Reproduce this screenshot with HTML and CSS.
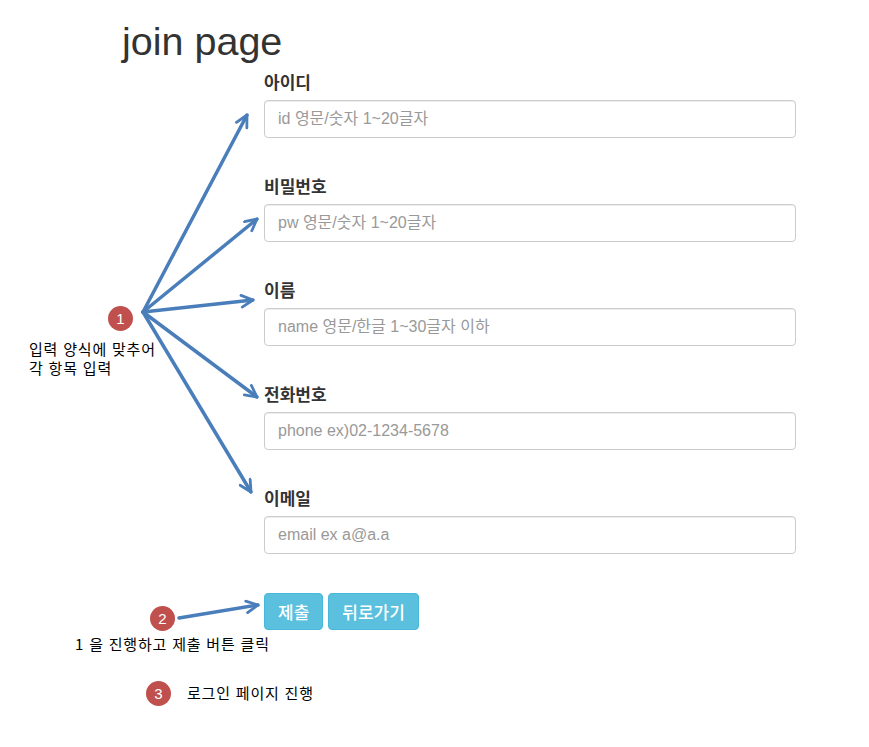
FILE: index.html
```html
<!DOCTYPE html>
<html lang="ko">
<head>
<meta charset="utf-8">
<title>join page</title>
<link rel="stylesheet" href="styles.css">
</head>
<body>
<div class="page">
  <h1 class="title">join page</h1>
  <form class="join-form">
    <div class="field">
      <label class="field-label" for="uid">아이디</label>
      <input class="field-input" id="uid" type="text" placeholder="id 영문/숫자 1~20글자">
    </div>
    <div class="field">
      <label class="field-label" for="upw">비밀번호</label>
      <input class="field-input" id="upw" type="password" placeholder="pw 영문/숫자 1~20글자">
    </div>
    <div class="field">
      <label class="field-label" for="uname">이름</label>
      <input class="field-input" id="uname" type="text" placeholder="name 영문/한글 1~30글자 이하">
    </div>
    <div class="field">
      <label class="field-label" for="uphone">전화번호</label>
      <input class="field-input" id="uphone" type="text" placeholder="phone ex)02-1234-5678">
    </div>
    <div class="field">
      <label class="field-label" for="uemail">이메일</label>
      <input class="field-input" id="uemail" type="text" placeholder="email ex a@a.a">
    </div>
    <div class="actions">
      <button class="btn" type="submit">제출</button>
      <button class="btn" type="button">뒤로가기</button>
    </div>
  </form>

  <svg class="arrows" width="869" height="747" viewBox="0 0 869 747" aria-hidden="true">
    <defs>
      <marker id="head" viewBox="0 0 10 10" refX="9" refY="5" markerWidth="4.2" markerHeight="4.2" orient="auto">
        <path d="M1.2 1 L9 5 L1.2 9" fill="none" stroke="#4a7ebb" stroke-width="1.9" stroke-linecap="round" stroke-linejoin="round"/>
      </marker>
    </defs>
    <g stroke="#4a7ebb" stroke-width="3.5" fill="none" stroke-linecap="round" marker-end="url(#head)">
      <line x1="143" y1="312" x2="247" y2="115"/>
      <line x1="143" y1="312" x2="257" y2="219"/>
      <line x1="143" y1="312" x2="253" y2="300"/>
      <line x1="143" y1="312" x2="257" y2="397"/>
      <line x1="143" y1="312" x2="251" y2="492"/>
      <line x1="179" y1="618" x2="258" y2="605"/>
    </g>
  </svg>

  <span class="badge badge-1">1</span>
  <p class="note note-1">입력 양식에 맞추어<br>각 항목 입력</p>
  <span class="badge badge-2">2</span>
  <p class="note note-2">1 을 진행하고 제출 버튼 클릭</p>
  <span class="badge badge-3">3</span>
  <p class="note note-3">로그인 페이지 진행</p>
</div>
</body>
</html>
```
FILE: styles.css
```css
html, body {
  margin: 0;
  padding: 0;
  background: #fff;
}

body {
  font-family: "Liberation Sans", "Noto Sans CJK KR", sans-serif;
  color: #333;
}

.page {
  position: relative;
  width: 869px;
  height: 747px;
  overflow: hidden;
}

.title {
  margin: 17px 0 0 122px;
  font-size: 39.5px;
  line-height: 48px;
  font-weight: 400;
  color: #333;
}

.join-form {
  margin: 9px 0 0 264px;
  width: 532px;
  display: flex;
  flex-direction: column;
}

.field {
  display: flex;
  flex-direction: column;
  margin-bottom: 40px;
}

.field-label {
  font-size: 17px;
  line-height: 20px;
  font-weight: 700;
  margin-bottom: 6px;
  color: #333;
}

.field-input {
  box-sizing: border-box;
  width: 532px;
  height: 38px;
  padding: 6px 13px;
  font-family: "Liberation Sans", "Noto Sans CJK KR", sans-serif;
  font-size: 16px;
  color: #555;
  background: #fff;
  border: 1px solid #ccc;
  border-radius: 4px;
  box-shadow: inset 0 1px 1px rgba(0, 0, 0, 0.075);
  outline: none;
}

.field-input::placeholder {
  color: #999;
}

.actions {
  display: flex;
  gap: 5px;
  margin-top: -1px;
}

.btn {
  box-sizing: border-box;
  height: 37px;
  padding: 0 13px;
  font-family: "Liberation Sans", "Noto Sans CJK KR", sans-serif;
  font-size: 17px;
  font-weight: 500;
  color: #fff;
  background: #5bc0de;
  border: 1px solid #46b8da;
  border-radius: 4px;
  cursor: pointer;
}

.arrows {
  position: absolute;
  left: 0;
  top: 0;
  pointer-events: none;
}

.badge {
  position: absolute;
  width: 25px;
  height: 25px;
  border-radius: 50%;
  background: #c0504d;
  color: #fff;
  font-family: "Liberation Sans", sans-serif;
  font-size: 15px;
  line-height: 25px;
  text-align: center;
}

.badge-1 { left: 108px; top: 306px; }
.badge-2 { left: 150px; top: 606px; }
.badge-3 { left: 146px; top: 681px; }

.note {
  position: absolute;
  margin: 0;
  font-family: "Noto Sans CJK KR", sans-serif;
  font-size: 15px;
  line-height: 19px;
  letter-spacing: 0.8px;
  color: #000;
  white-space: nowrap;
}

.note-1 { left: 29px; top: 339px; }
.note-2 { left: 75px; top: 634px; }
.note-3 { left: 187px; top: 683px; }
```
